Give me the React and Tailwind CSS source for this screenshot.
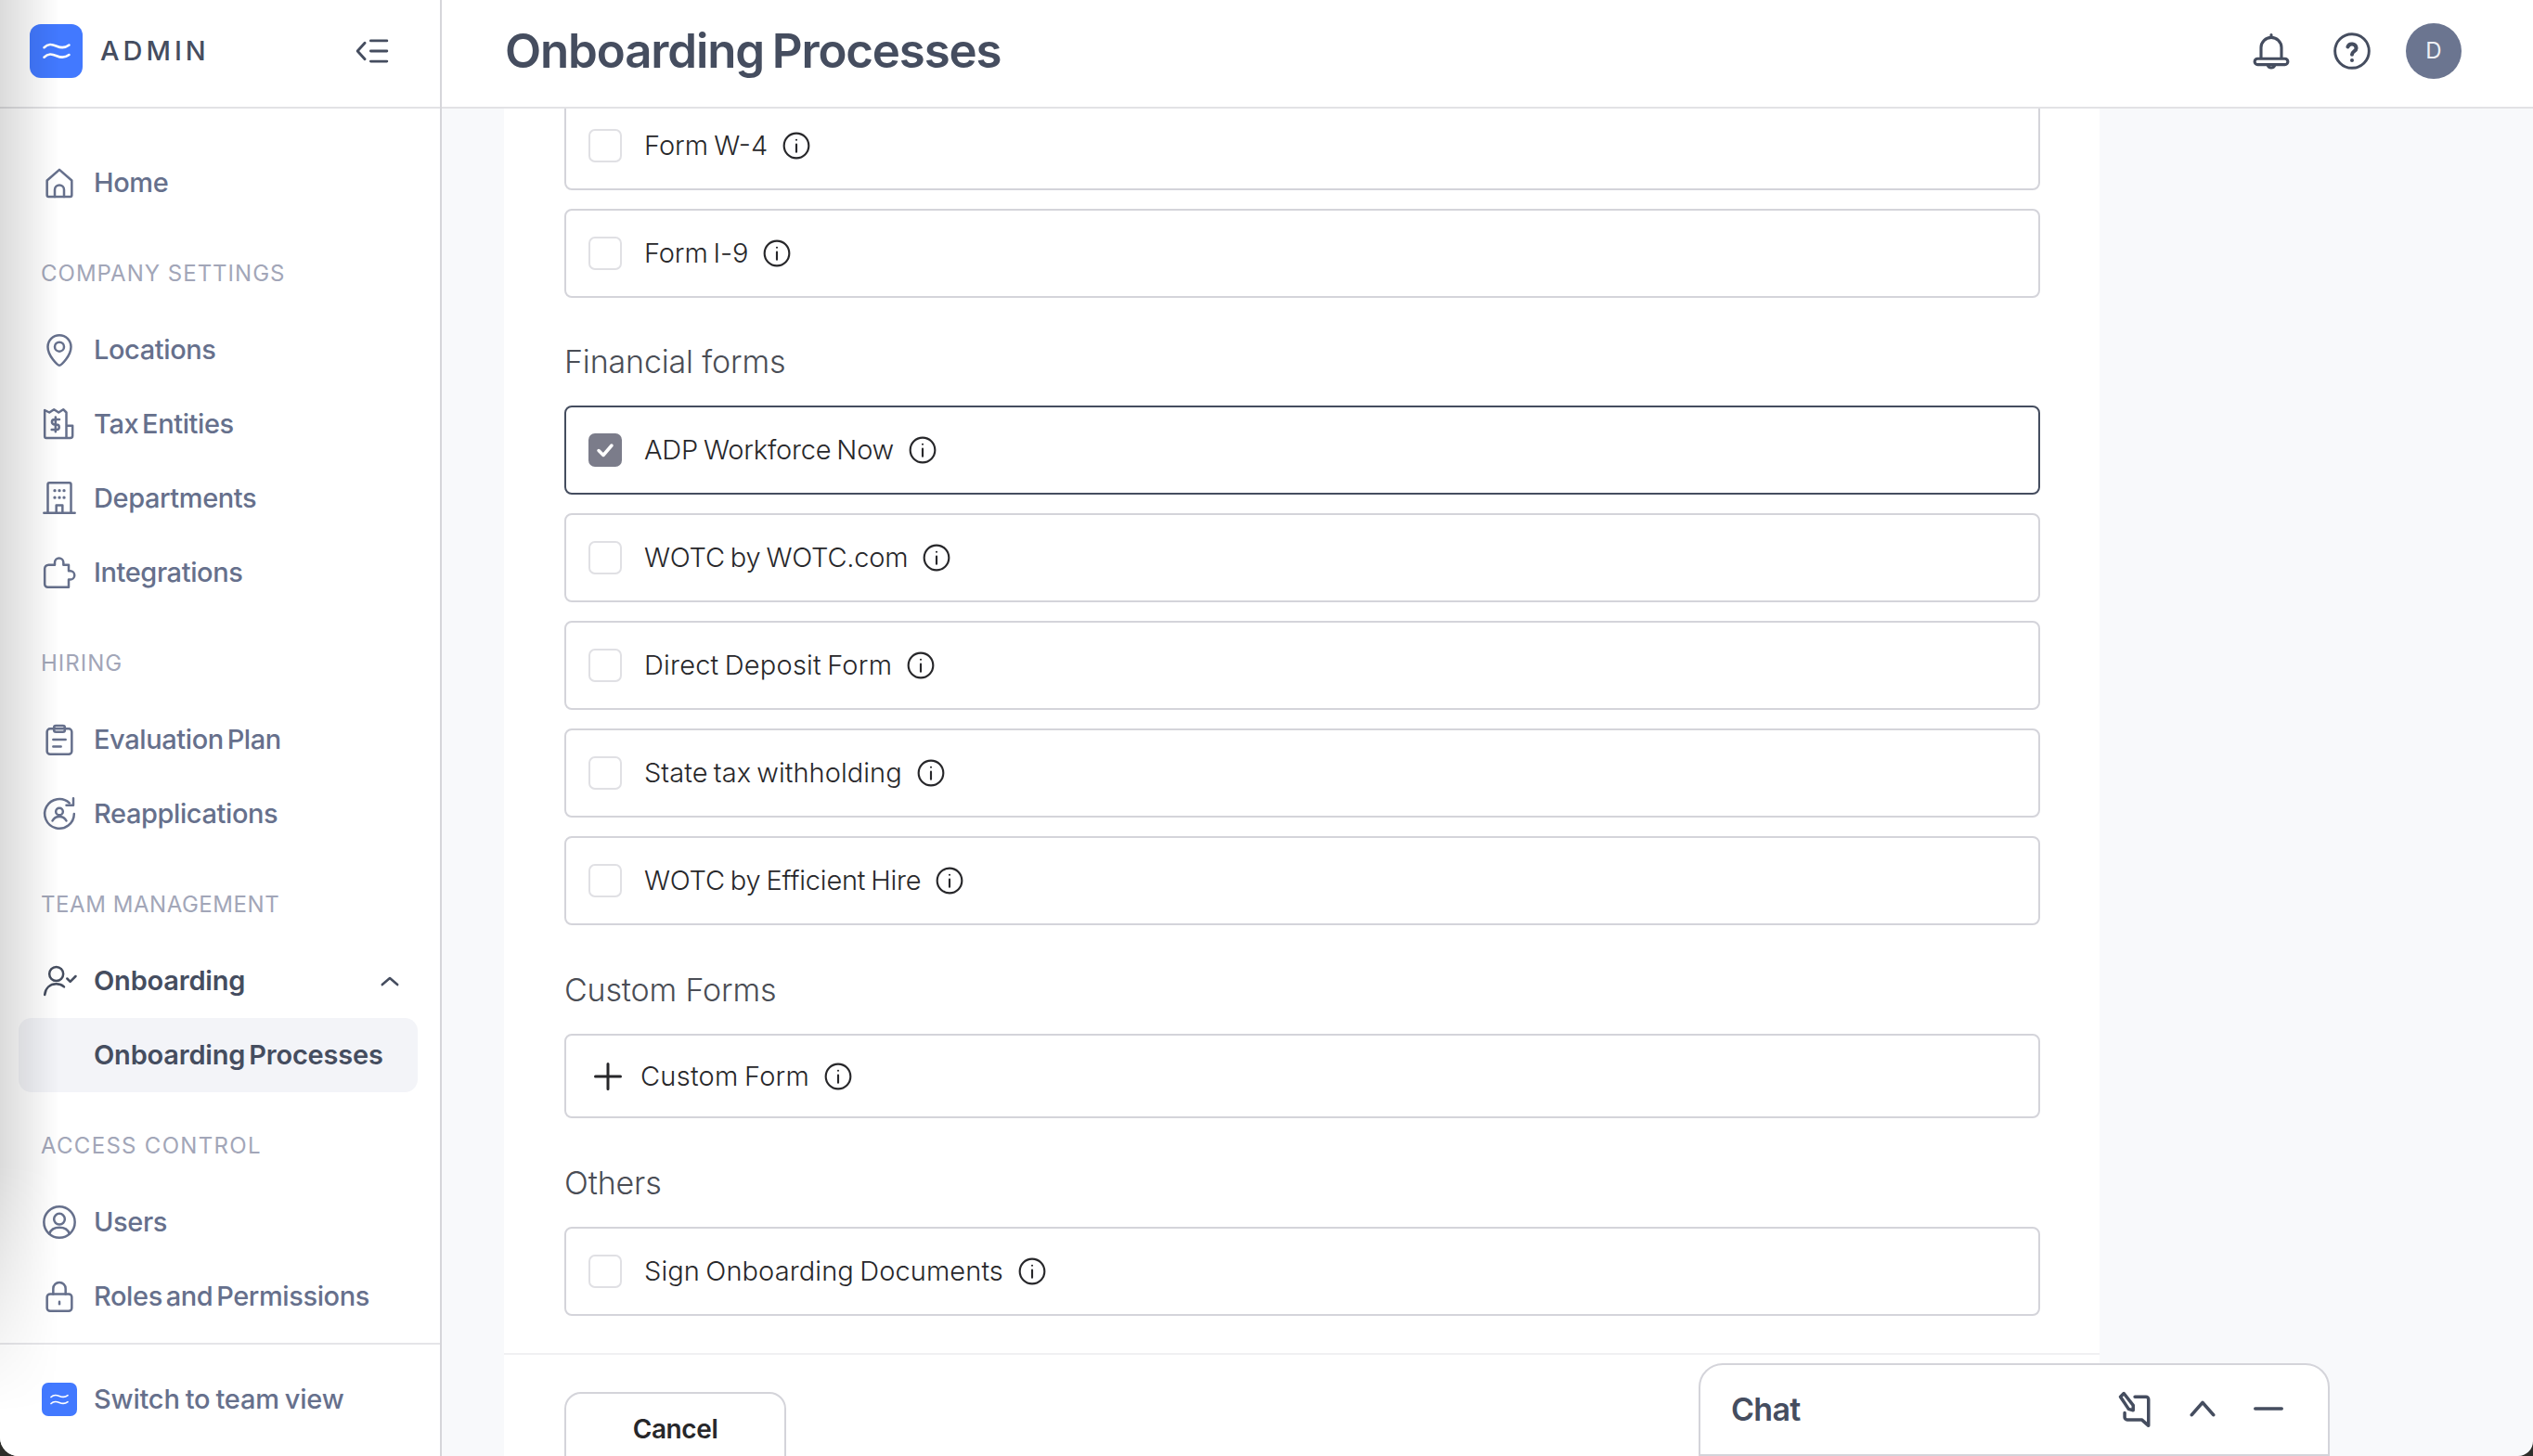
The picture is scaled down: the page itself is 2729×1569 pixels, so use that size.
import React from "react";

const S = ({ children, size = 40, sw = 1.5, cls = "" }) => (
  <svg width={size} height={size} viewBox="0 0 24 24" fill="none" stroke="currentColor" strokeWidth={sw} strokeLinecap="round" strokeLinejoin="round" className={"shrink-0 " + cls}>
    {children}
  </svg>
);

const Home = () => (
  <S><path d="M4 10.500 12 3.500l8 7V20a1 1 0 0 1-1 1H5a1 1 0 0 1-1-1z" /><path d="M9 21v-4.500a3 3 0 0 1 6 0V21" /></S>
);
const Pin = () => (
  <S><path d="M12 22c-1 0-7.500-6-7.500-12a7.500 7.500 0 0 1 15 0c0 6-6.500 12-7.500 12z" /><circle cx="12" cy="10" r="3" /></S>
);
const Tax = () => (
  <S><path d="M16.500 21H3.500a1 1 0 0 1-1-1V3l3 1.500L8.500 2.500l3 2 3-2 2 2V21h2.500a1.500 1.500 0 0 0 1.500-1.500V13h-4" /><path d="M12 9H8.800a1.600 1.600 0 0 0 0 3.300h1.400a1.600 1.600 0 0 1 0 3.300H7M9.500 7.500v9.500" /></S>
);
const Building = () => (
  <S><path d="M4.500 21.500V3a1 1 0 0 1 1-1h13a1 1 0 0 1 1 1v18.500M2 21.500h20" /><path d="M10 21.500v-5h4v5" /><path d="M9 7h.01M15 7h.01M9 11.500h.01M15 11.500h.01M12 7h.01M12 11.500h.01" strokeWidth="2" /></S>
);
const Puzzle = () => (
  <S><path d="M5 7h4V5.500a2.800 2.800 0 0 1 5.600 0V7H18v4h1a2.700 2.700 0 0 1 0 5.500h-1v5H4.500a2 2 0 0 1-2-2v-10A2.500 2.500 0 0 1 5 7z" /></S>
);
const Clip = () => (
  <S><rect x="4" y="5" width="16" height="16.500" rx="2" /><rect x="8.500" y="3" width="7" height="4" rx="1.200" /><path d="M8 12h8M8 16.500h5" /></S>
);
const Reapply = () => (
  <S><path d="M21.500 12a9.500 9.500 0 1 1-3-7" /><path d="M21 2v4.500h-4.500" /><circle cx="12" cy="10.500" r="2.300" /><path d="M7.500 16.500c1-2 2.500-2.700 4.500-2.700s3.500.7 4.500 2.700" /></S>
);
const UserCheck = () => (
  <S><circle cx="10" cy="7.500" r="4.500" /><path d="M2.500 21c.5-4.500 3.500-7 7.500-7 2 0 3.500.5 5 1.800" /><path d="m17 10.500 2 2 3.500-3.500" /></S>
);
const UserCircle = () => (
  <S><circle cx="12" cy="12" r="10" /><circle cx="12" cy="10" r="3.500" /><path d="M5.500 19.500c1-2.700 3.500-4 6.500-4s5.500 1.300 6.500 4" /></S>
);
const Lock = () => (
  <S><rect x="4" y="10.500" width="16" height="11" rx="2" /><path d="M8 10.500V7a4 4 0 0 1 8 0v3.500" /><path d="M12 15.500v1.500" /></S>
);
const Waves = ({ size }) => (
  <svg width={size} height={size} viewBox="0 0 24 24" fill="none" stroke="white" strokeWidth="1.700" strokeLinecap="round">
    <path d="M3 9.500c3-3 5.500-2.500 9-1s6 1.500 9-.8" />
    <path d="M3 16.500c3-3 5.500-2.500 9-1s6 1.500 9-.8" />
  </svg>
);
const Info = () => (
  <S size={32} sw={1.600}>
    <circle cx="12" cy="12" r="10" />
    <path d="M12 11v6M12 7.300h.01" />
  </S>
);

const Label = ({ children, track }) => (
  <div className={"mt-[38px] mb-[22px] h-[40px] pl-[44px] flex items-center text-[24px] text-[#a2a6b8] " + track}>{children}</div>
);
const Row = ({ icon, children }) => (
  <div className="h-[80px] flex items-center pl-[44px] gap-[17px] text-[29px] font-medium tracking-[-0.4px] [word-spacing:-3.5px] text-[#66708c]">
    {icon}
    <span>{children}</span>
  </div>
);

const Box = ({ checked }) =>
  checked ? (
    <div className="w-[36px] h-[36px] rounded-[7px] bg-[#7b7c8a] flex items-center justify-center text-white shrink-0">
      <S size={24} sw={3.500}><path d="M5 12.500 10 17.500 19 7" /></S>
    </div>
  ) : (
    <div className="w-[36px] h-[36px] rounded-[7px] border-2 border-[#e0e0e4] bg-white shrink-0" />
  );

const Card = ({ label, checked, track }) => (
  <div className={"h-[96px] rounded-[8px] border-2 flex items-center pl-[24px] " + (checked ? "border-[#454d5f]" : "border-[#d4d4da]")}>
    <Box checked={checked} />
    <span className={"ml-[24px] mr-[15px] text-[29px] font-[350] [word-spacing:-2px] text-[#27272a] " + track}>{label}</span>
    <span className="text-[#27272a] flex"><Info /></span>
  </div>
);
const Heading = ({ children }) => (
  <h2 className="h-[36px] leading-[36px] text-[34px] font-light text-[#4a4d55] tracking-[-0.15px]">{children}</h2>
);

export default function App() {
  return (
    <div className="relative w-[2729px] h-[1569px] bg-[#2e2e2a] overflow-hidden [font-family:Inter,sans-serif]">
      <div className="relative w-full h-full flex bg-[#f8f9fb] rounded-bl-[20px] rounded-br-[16px] overflow-hidden">
        <aside className="w-[476px] h-full shrink-0 bg-white border-r-2 border-[#d6d6da] flex flex-col">
          <div className="h-[117px] shrink-0 border-b-2 border-[#e2e2e5] flex items-center pl-[32px] pr-[54px] pb-[6px]">
            <div className="w-[57px] h-[58px] rounded-[12px] bg-[#4279ff] flex items-center justify-center"><Waves size={36} /></div>
            <span className="ml-[19px] text-[29px] font-medium tracking-[4px] text-[#454d5f]">ADMIN</span>
            <span className="ml-auto text-[#454d5f] flex">
              <S size={38} sw={1.800}>
                <path d="m7 6.500-5 5.500 5 5.500M11 5h11M11 12h11M11 19h11" />
              </S>
            </span>
          </div>
          <nav className="flex-1 flex flex-col pt-[40px]">
            <Row icon={<Home />}>Home</Row>
            <Label track="tracking-[1px]">COMPANY SETTINGS</Label>
            <Row icon={<Pin />}>Locations</Row>
            <Row icon={<Tax />}>Tax Entities</Row>
            <Row icon={<Building />}>Departments</Row>
            <Row icon={<Puzzle />}>Integrations</Row>
            <Label track="tracking-[1px]">HIRING</Label>
            <Row icon={<Clip />}>Evaluation Plan</Row>
            <Row icon={<Reapply />}>Reapplications</Row>
            <Label track="tracking-[0.55px]">TEAM MANAGEMENT</Label>
            <div className="h-[80px] flex items-center pl-[44px] gap-[17px] pr-[40px] text-[29px] font-semibold tracking-[-0.2px] text-[#454d5f]">
              <UserCheck />
              <span>Onboarding</span>
              <span className="ml-auto flex"><S size={28} sw={2.200}><path d="m5 15.500 7-6 7 6" /></S></span>
            </div>
            <div className="h-[80px] ml-[20px] w-[430px] rounded-[14px] bg-[#f3f4f8] flex items-center pl-[81px] text-[29px] font-semibold tracking-[-0.2px] [word-spacing:-3px] text-[#454d5f]">Onboarding Processes</div>
            <Label track="tracking-[1.3px]">ACCESS CONTROL</Label>
            <Row icon={<UserCircle />}>Users</Row>
            <Row icon={<Lock />}>Roles and Permissions</Row>
          </nav>
          <div className="h-[122px] shrink-0 border-t-2 border-[#e5e5e8] flex items-center pl-[45px] pb-[2px] gap-[18px] text-[29px] font-medium tracking-[-0.2px] [word-spacing:-1.5px] text-[#66708c]">
            <div className="w-[38px] h-[36px] rounded-[7px] bg-[#4279ff] flex items-center justify-center"><Waves size={24} /></div>
            <span>Switch to team view</span>
          </div>
        </aside>

        <main className="flex-1 flex flex-col min-w-0">
          <header className="h-[117px] shrink-0 bg-white border-b-2 border-[#e2e2e5] flex items-center pl-[68px] pb-[6px] text-[#454d5f]">
            <h1 className="mt-[2px] text-[51px] font-semibold tracking-[-1.15px] [word-spacing:-3px]">Onboarding Processes</h1>
            <div className="ml-auto flex items-center">
              <S size={44} sw={1.700}>
                <path d="M12 2.500v1.500M6 16V10a6 6 0 0 1 12 0v6" />
                <path d="M4 16.500h16a1.500 1.500 0 0 1 0 3.500H4a1.500 1.500 0 0 1 0-3.500z" />
                <path d="M10 20.500a2.200 2.200 0 0 0 4 0" />
              </S>
              <span className="ml-[43px] flex">
                <S size={44} sw={1.600}>
                  <circle cx="12" cy="12" r="10" />
                  <path d="M9.500 9.500a2.600 2.600 0 0 1 5 .8c0 1.700-2.500 2-2.500 3.700M12 17.500h.01" strokeWidth="2.200" />
                </S>
              </span>
              <div className="ml-[36px] mr-[77px] w-[60px] h-[60px] rounded-full bg-[#6b7590] flex items-center justify-center text-[24px] text-[#eef0f5]">D</div>
            </div>
          </header>

          <div className="flex-1 min-h-0 pl-[67px]">
            <div className="w-[1719px] h-full bg-white overflow-hidden flex flex-col">
              <div className="-mt-[8px] pl-[65px] pr-[64px] pb-[40px] flex flex-col">
                <div className="flex flex-col gap-[20px]">
                  <Card label="Form W-4" track="tracking-[0px]" />
                  <Card label="Form I-9" track="tracking-[-0.15px]" />
                </div>
                <div className="mt-[51px] mb-[29px]"><Heading>Financial forms</Heading></div>
                <div className="flex flex-col gap-[20px]">
                  <Card label="ADP Workforce Now" checked track="tracking-[-0.2px]" />
                  <Card label="WOTC by WOTC.com" track="tracking-[-0.2px]" />
                  <Card label="Direct Deposit Form" track="tracking-[0.2px]" />
                  <Card label="State tax withholding" track="tracking-[0.05px]" />
                  <Card label="WOTC by Efficient Hire" track="tracking-[-0.2px]" />
                </div>
                <div className="mt-[52px] mb-[29px]"><Heading>Custom Forms</Heading></div>
                <div className="h-[91px] rounded-[8px] border-2 border-[#d4d4da] flex items-center pl-[27px] text-[#27272a]">
                  <S size={36} sw={2}><path d="M12 3v18M3 12h18" /></S>
                  <span className="ml-[17px] mr-[15px] text-[29px] font-[350] tracking-[0.25px] [word-spacing:-2px]">Custom Form</span>
                  <span className="flex"><Info /></span>
                </div>
                <div className="mt-[52px] mb-[29px]"><Heading>Others</Heading></div>
                <Card label="Sign Onboarding Documents" track="tracking-[0.1px]" />
              </div>
              <div className="border-t-2 border-[#f0f0f2] pt-[40px] pl-[65px]">
                <button className="w-[239px] h-[90px] rounded-t-[18px] border-2 border-[#d4d4da] pb-[10px] text-[28px] font-semibold tracking-[-0.4px] text-[#27272a]">Cancel</button>
              </div>
            </div>
          </div>
        </main>

        <div className="absolute left-[1830px] top-[1469px] w-[680px] h-[100px] bg-white rounded-t-[26px] border-2 border-[#d4d4da] flex items-center pl-[33px] pb-[2px] text-[#454d5f]">
          <span className="text-[34px] font-semibold tracking-[-0.7px]">Chat</span>
          <span className="ml-auto flex">
            <S size={44} sw={1.900}>
              <path d="M11.500 5H18a1.500 1.500 0 0 1 1.500 1.500V22l-4-3.500H7a1.500 1.500 0 0 1-1.500-1.500v-2.500" />
              <path d="m3 5 2-2 5.500 7v3l-2.700-.8z" />
            </S>
          </span>
          <span className="ml-[30px] flex"><S size={40} sw={2.200}><path d="m5 16 7-8 7 8" /></S></span>
          <span className="ml-[32px] mr-[45px] flex"><S size={38} sw={2.200}><path d="M3 12h18" /></S></span>
        </div>

        <div className="absolute left-0 top-0 bottom-0 w-[64px] pointer-events-none bg-gradient-to-r from-[#00000024] to-[#00000000] [mask-image:linear-gradient(to_bottom,black_80%,transparent_97%)]" />
      </div>
    </div>
  );
}
